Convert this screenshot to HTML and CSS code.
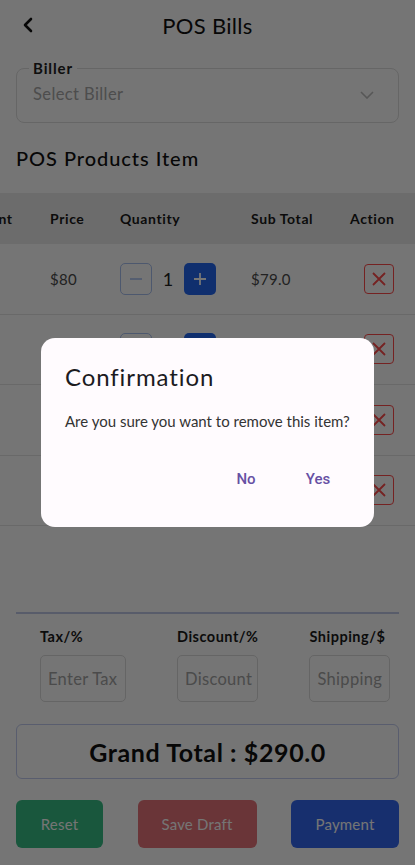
FILE: index.html
```html
<!DOCTYPE html>
<html lang="en">
<head>
<meta charset="utf-8">
<title>POS Bills</title>
<link rel="stylesheet" href="styles.css">
</head>
<body>
<div class="screen">
  <header class="topbar">
    <button class="back" aria-label="Back">
      <svg width="14" height="16" viewBox="0 0 14 16"><path d="M10 2 L4 8 L10 14" fill="none" stroke="#111" stroke-width="2.6" stroke-linecap="round" stroke-linejoin="round"/></svg>
    </button>
    <h1 class="title">POS Bills</h1>
  </header>

  <fieldset class="biller">
    <legend class="biller-label">Biller</legend>
    <div class="biller-body">
      <span class="placeholder">Select Biller</span>
      <svg class="chev" width="14" height="8" viewBox="0 0 14 8"><path d="M1 1 L7 7 L13 1" fill="none" stroke="#bdbdbd" stroke-width="1.6"/></svg>
    </div>
  </fieldset>

  <h2 class="section-title">POS Products Item</h2>

  <div class="table-wrap">
    <div class="table">
      <div class="row head">
        <div class="c c-disc">Discount</div>
        <div class="c c-price">Price</div>
        <div class="c c-qty">Quantity</div>
        <div class="c c-sub">Sub Total</div>
        <div class="c c-act-h">Action</div>
      </div>
      <div class="row">
        <div class="c c-disc">$1</div>
        <div class="c c-price">$80</div>
        <div class="c c-qty"><span class="qbtn minus"><svg width="14" height="14" viewBox="0 0 14 14"><path d="M1 7 H13" stroke="#a8c0f0" stroke-width="1.6"/></svg></span><span class="qnum">1</span><span class="qbtn plus"><svg width="14" height="14" viewBox="0 0 14 14"><path d="M1 7 H13 M7 1 V13" stroke="#fff" stroke-width="1.8"/></svg></span></div>
        <div class="c c-sub">$79.0</div>
        <div class="c c-act"><span class="del"><svg width="16" height="16" viewBox="0 0 16 16"><path d="M2 2 L14 14 M14 2 L2 14" stroke="#ff4a4a" stroke-width="1.8"/></svg></span></div>
      </div>
      <div class="row">
        <div class="c c-disc">$1</div>
        <div class="c c-price">$100</div>
        <div class="c c-qty"><span class="qbtn minus"><svg width="14" height="14" viewBox="0 0 14 14"><path d="M1 7 H13" stroke="#a8c0f0" stroke-width="1.6"/></svg></span><span class="qnum">1</span><span class="qbtn plus"><svg width="14" height="14" viewBox="0 0 14 14"><path d="M1 7 H13 M7 1 V13" stroke="#fff" stroke-width="1.8"/></svg></span></div>
        <div class="c c-sub">$99.0</div>
        <div class="c c-act"><span class="del"><svg width="16" height="16" viewBox="0 0 16 16"><path d="M2 2 L14 14 M14 2 L2 14" stroke="#ff4a4a" stroke-width="1.8"/></svg></span></div>
      </div>
      <div class="row">
        <div class="c c-disc">$1</div>
        <div class="c c-price">$60</div>
        <div class="c c-qty"><span class="qbtn minus"><svg width="14" height="14" viewBox="0 0 14 14"><path d="M1 7 H13" stroke="#a8c0f0" stroke-width="1.6"/></svg></span><span class="qnum">1</span><span class="qbtn plus"><svg width="14" height="14" viewBox="0 0 14 14"><path d="M1 7 H13 M7 1 V13" stroke="#fff" stroke-width="1.8"/></svg></span></div>
        <div class="c c-sub">$59.0</div>
        <div class="c c-act"><span class="del"><svg width="16" height="16" viewBox="0 0 16 16"><path d="M2 2 L14 14 M14 2 L2 14" stroke="#ff4a4a" stroke-width="1.8"/></svg></span></div>
      </div>
      <div class="row">
        <div class="c c-disc">$1</div>
        <div class="c c-price">$54</div>
        <div class="c c-qty"><span class="qbtn minus"><svg width="14" height="14" viewBox="0 0 14 14"><path d="M1 7 H13" stroke="#a8c0f0" stroke-width="1.6"/></svg></span><span class="qnum">1</span><span class="qbtn plus"><svg width="14" height="14" viewBox="0 0 14 14"><path d="M1 7 H13 M7 1 V13" stroke="#fff" stroke-width="1.8"/></svg></span></div>
        <div class="c c-sub">$53.0</div>
        <div class="c c-act"><span class="del"><svg width="16" height="16" viewBox="0 0 16 16"><path d="M2 2 L14 14 M14 2 L2 14" stroke="#ff4a4a" stroke-width="1.8"/></svg></span></div>
      </div>
    </div>
  </div>

  <div class="spacer"></div>

  <section class="summary">
    <div class="charges">
      <div class="charge">
        <div class="charge-label">Tax/%</div>
        <div class="charge-input w-tax">Enter Tax</div>
      </div>
      <div class="charge">
        <div class="charge-label">Discount/%</div>
        <div class="charge-input w-disc">Discount</div>
      </div>
      <div class="charge">
        <div class="charge-label">Shipping/$</div>
        <div class="charge-input w-ship">Shipping</div>
      </div>
    </div>
    <div class="grand">Grand Total : $290.0</div>
    <div class="actions">
      <button class="btn btn-reset">Reset</button>
      <button class="btn btn-draft">Save Draft</button>
      <button class="btn btn-pay">Payment</button>
    </div>
  </section>
</div>

<div class="scrim">
  <div class="dialog" role="dialog">
    <h3 class="dialog-title">Confirmation</h3>
    <p class="dialog-text">Are you sure you want to remove this item?</p>
    <div class="dialog-actions">
      <button class="tbtn">No</button>
      <button class="tbtn">Yes</button>
    </div>
  </div>
</div>
</body>
</html>
```

FILE: styles.css
```css
* { box-sizing: border-box; }
html, body { margin: 0; padding: 0; }
body {
  width: 415px;
  height: 865px;
  overflow: hidden;
  background: #fff;
  font-family: "Lato", "Open Sans", sans-serif;
  color: #1e1e1e;
}
button { font: inherit; border: 0; background: none; padding: 0; cursor: pointer; }

.screen {
  height: 865px;
  display: flex;
  flex-direction: column;
}

.topbar {
  height: 50px;
  display: flex;
  align-items: center;
  justify-content: center;
  position: relative;
}
.back {
  position: absolute;
  left: 21px;
  top: 17px;
  width: 16px;
  height: 16px;
  display: flex;
}
.title {
  margin: 0;
  font-size: 22px;
  font-weight: 400;
  color: #111;
  letter-spacing: 0.3px;
}

.biller {
  margin: 9px 16px 0;
  padding: 0 12px;
  border: 1px solid #dedede;
  border-radius: 8px;
  min-width: 0;
}
.biller-label {
  padding: 0 4px;
  font-size: 15px;
  line-height: 18px;
  font-weight: 700;
  letter-spacing: 0.9px;
  color: #222;
}
.biller-body {
  height: 45px;
  padding: 6px 4px 0;
  display: flex;
  align-items: flex-start;
  justify-content: space-between;
}
.placeholder {
  font-size: 16.5px;
  line-height: 22px;
  letter-spacing: 0.4px;
  color: #a8a8a8;
}
.chev { margin-top: 8px; margin-right: 8px; }

.section-title {
  margin: 23px 16px 0;
  font-size: 20px;
  line-height: 24px;
  font-weight: 500;
  letter-spacing: 0.95px;
  color: #111;
}

.table-wrap {
  margin-top: 23px;
  width: 415px;
  overflow: hidden;
}
.table {
  margin-left: -64px;
  width: 479px;
}
.row {
  display: grid;
  grid-template-columns: 114px 70px 131px 99px 65px;
  align-items: center;
  height: 70.5px;
  border-bottom: 1px solid #e4e4e4;
  font-size: 15px;
  letter-spacing: 0.3px;
  color: #4a4a4a;
}
.row.head {
  height: 51px;
  background: #ececec;
  border-bottom: 0;
  font-size: 14px;
  font-weight: 700;
  letter-spacing: 0.6px;
  color: #1a1a1a;
}
.c-disc { padding-left: 16px; }
.c-qty { display: flex; align-items: center; }
.qbtn {
  width: 32px;
  height: 32px;
  border-radius: 5px;
  display: flex;
  align-items: center;
  justify-content: center;
}
.qbtn.minus { border: 1.5px solid #a8c0f0; }
.qbtn.plus { background: #2466f0; }
.qnum {
  width: 32px;
  text-align: center;
  font-size: 18px;
  color: #222;
}
.c-act { display: flex; padding-left: 14px; }
.del {
  width: 30px;
  height: 30px;
  border: 1.5px solid #ff4a4a;
  border-radius: 4px;
  display: flex;
  align-items: center;
  justify-content: center;
}

.spacer { flex: 1; }

.summary {
  margin: 0 16px 17px;
  border-top: 2px solid #c0c8e6;
}
.charges {
  display: flex;
  gap: 51px;
  padding: 14px 0 0 24px;
}
.charge-label {
  font-size: 14.5px;
  line-height: 18px;
  font-weight: 700;
  letter-spacing: 0.5px;
  color: #1a1a1a;
  white-space: nowrap;
}
.charge-input {
  margin-top: 9px;
  height: 47px;
  border: 1px solid #dcdcdc;
  border-radius: 5px;
  padding-left: 7px;
  display: flex;
  align-items: center;
  font-size: 16.5px;
  letter-spacing: 0.3px;
  color: #a3a3a3;
  white-space: nowrap;
  overflow: hidden;
}
.w-tax { width: 86px; }
.w-disc { width: 81px; }
.w-ship { width: 81px; }

.grand {
  margin-top: 22px;
  height: 55px;
  border: 1px solid #c2cbef;
  border-radius: 6px;
  display: flex;
  align-items: center;
  justify-content: center;
  font-size: 25px;
  font-weight: 700;
  letter-spacing: 0.6px;
  color: #111;
}

.actions {
  margin-top: 21px;
  display: flex;
  justify-content: space-between;
}
.btn {
  height: 48px;
  border-radius: 6px;
  color: #fff;
  font-size: 15px;
  letter-spacing: 0.2px;
}
.btn-reset { width: 87px; background: #38bd86; }
.btn-draft { width: 119px; background: #e6737a; }
.btn-pay { width: 108px; background: #3468ef; }

.scrim {
  position: fixed;
  inset: 0;
  background: rgba(0, 0, 0, 0.54);
  display: flex;
  align-items: center;
  justify-content: center;
}
.dialog {
  width: 333px;
  height: 189px;
  background: #fffbfe;
  border-radius: 14px;
  padding: 23px 24px 0;
}
.dialog-title {
  margin: 0;
  font-size: 24px;
  line-height: 32px;
  font-weight: 400;
  letter-spacing: 0.9px;
  color: #1c1b1f;
}
.dialog-text {
  margin: 17px 0 0;
  font-size: 15px;
  line-height: 22px;
  color: #333;
}
.dialog-actions {
  margin-top: 27px;
  display: flex;
  justify-content: flex-end;
  gap: 8px;
}
.tbtn {
  min-width: 64px;
  height: 40px;
  padding: 0 12px;
  font-family: "Roboto", sans-serif;
  font-size: 15px;
  font-weight: 500;
  color: #6750a4;
}
```
